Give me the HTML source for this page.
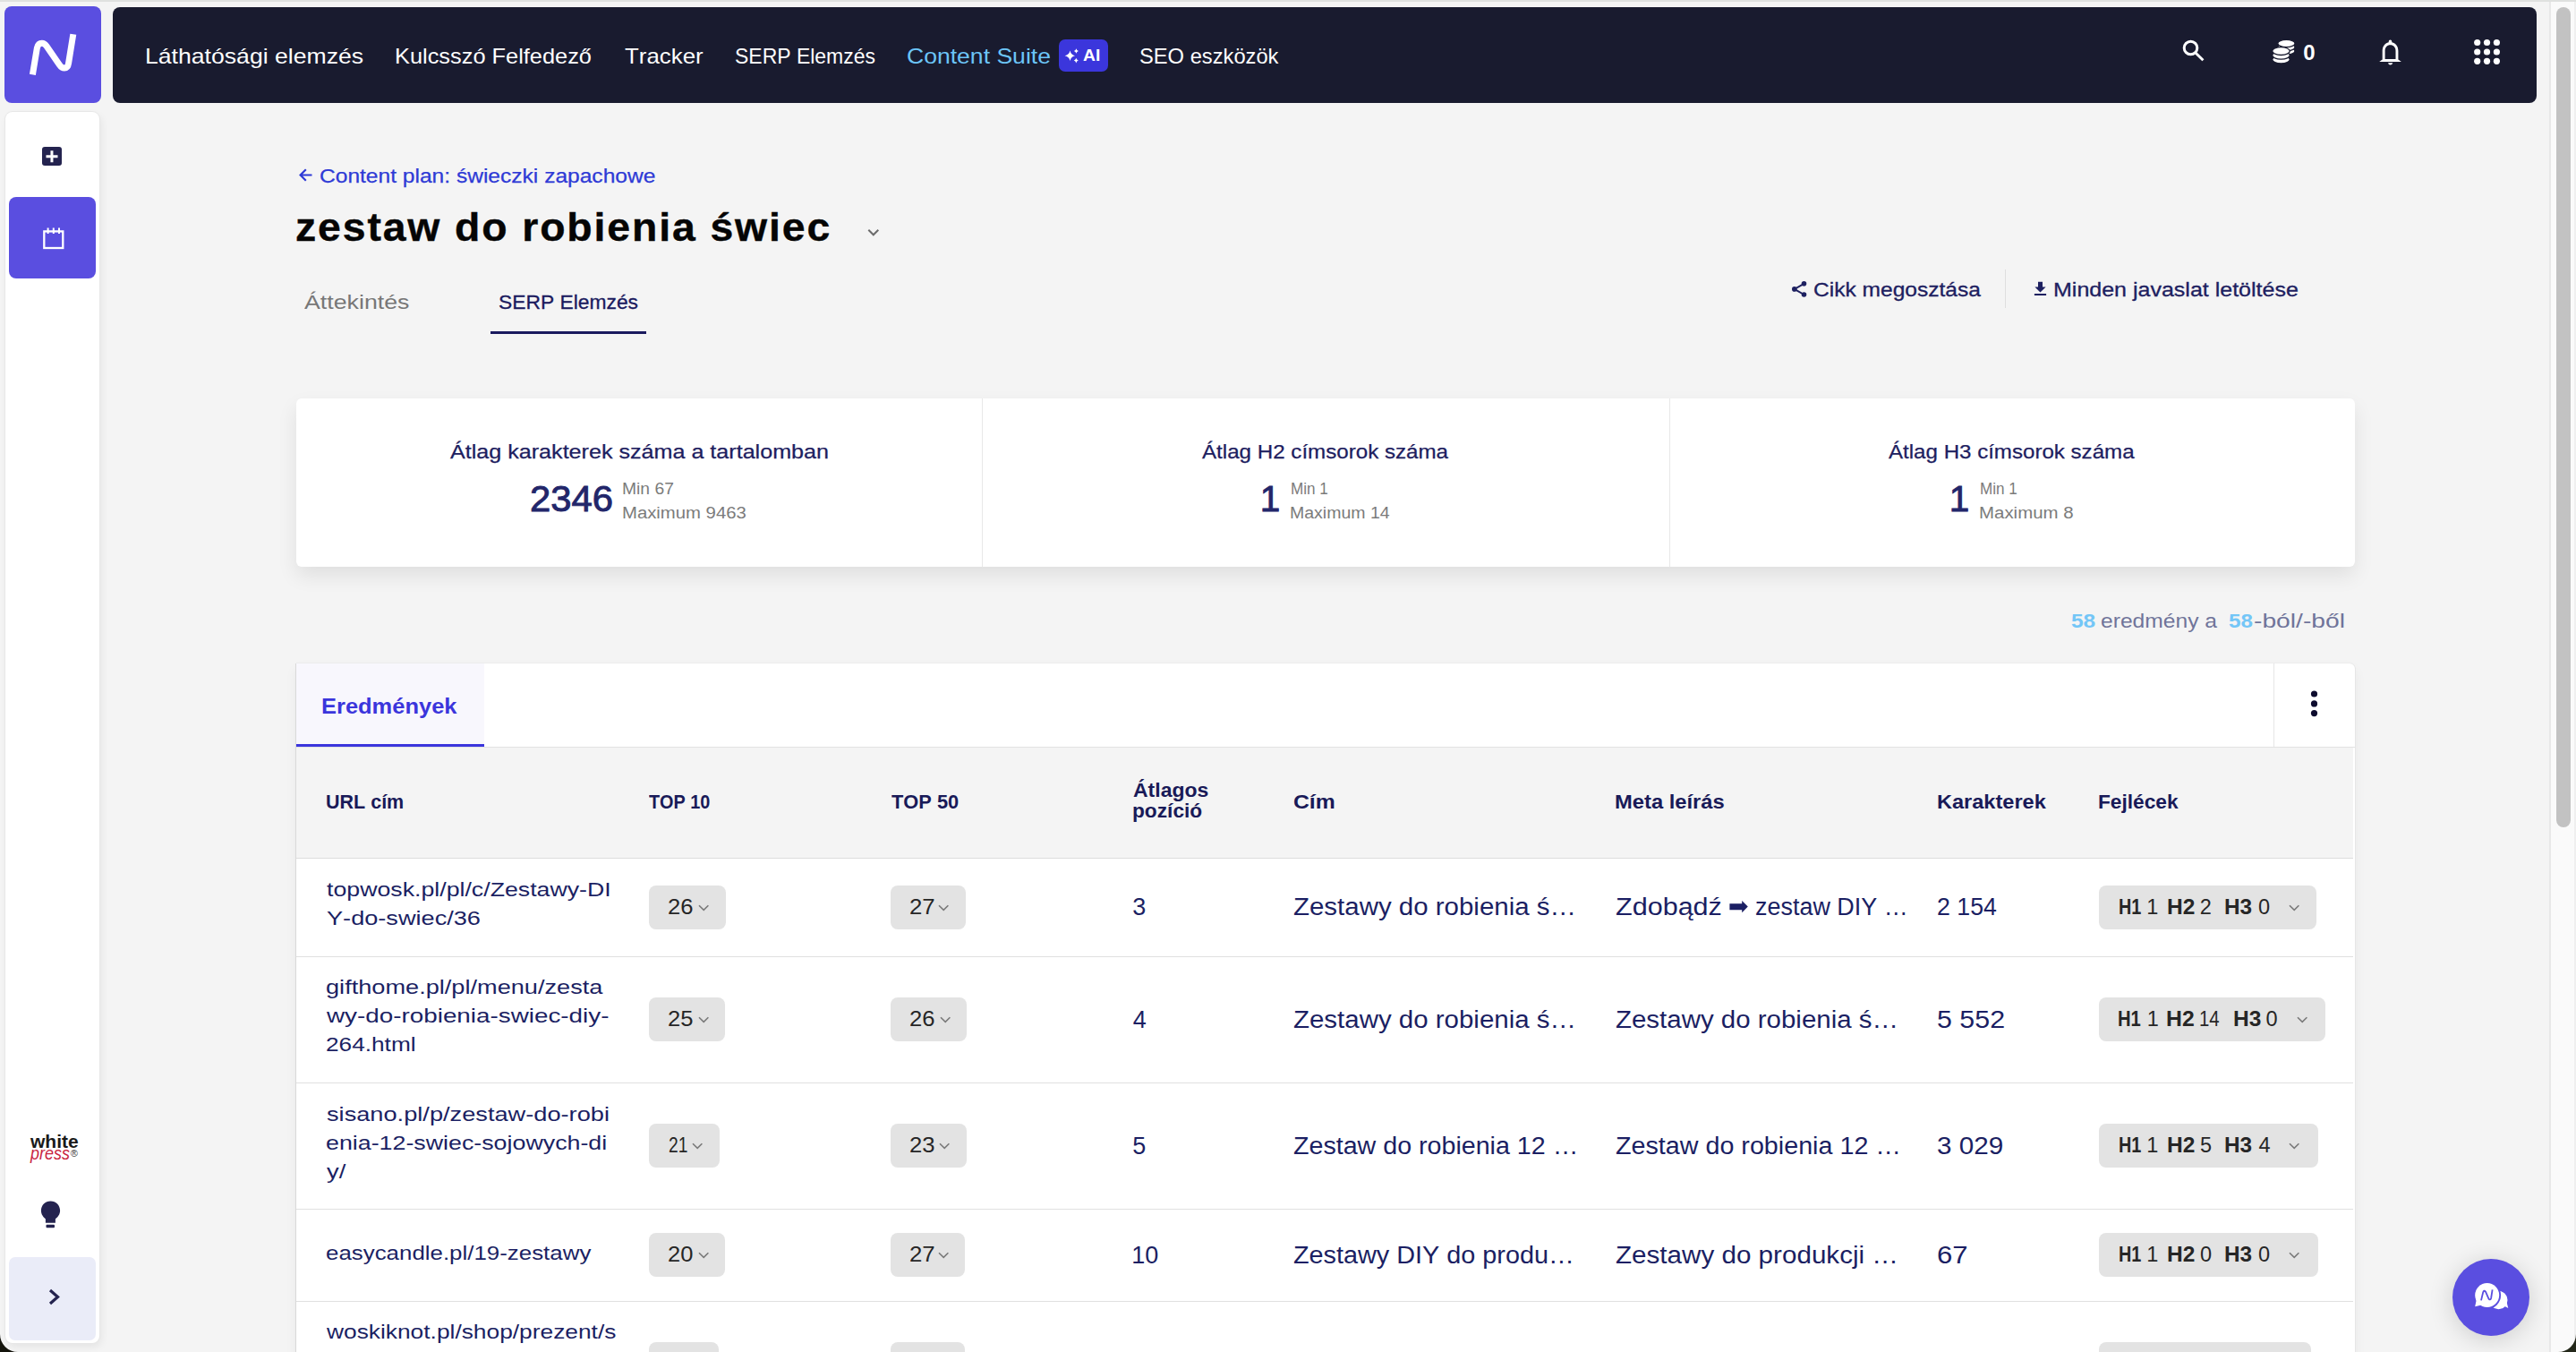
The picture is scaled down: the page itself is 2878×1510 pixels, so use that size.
<!DOCTYPE html>
<html><head><meta charset="utf-8"><title>SERP</title>
<style>
html,body{margin:0;padding:0;}
body{width:2878px;height:1510px;overflow:hidden;position:relative;background:#f4f4f4;font-family:"Liberation Sans",sans-serif;}
.a{position:absolute;display:block;}
.t{position:absolute;white-space:pre;font-kerning:none;font-family:"Liberation Sans",sans-serif;}
</style></head><body>
<div class="a" style="left:0.00px;top:0.00px;width:2878.00px;height:2.00px;background:#dfe1df;"></div>
<div class="a" style="left:2848.00px;top:2.00px;width:30.00px;height:1508.00px;background:#fafafa;border-left:2px solid #e8e8e8;box-sizing:border-box;"></div>
<div class="a" style="left:2876.00px;top:2.00px;width:2.00px;height:1508.00px;background:#efefef;"></div>
<div class="a" style="left:2856.00px;top:8.00px;width:16.00px;height:916.00px;background:#c2c2c2;border-radius:8px;"></div>
<div class="a" style="left:5.00px;top:7.00px;width:108.00px;height:108.00px;background:#5a4ee0;border-radius:8px;"></div>
<svg class="a" style="left:5.00px;top:7.00px;" width="108.00" height="108.00" viewBox="5.00 7.00 108.00 108.00"><path d="M36.4 83.4 L41.4 53.5 Q42.6 48.3 46.8 48.3 Q49.8 48.3 52 51.5 L66.3 72.3 Q68.8 76 72 76 Q75.8 76 76.6 70.5 L81.8 38.3" fill="none" stroke="#fff" stroke-width="7" stroke-linejoin="round"/></svg>
<div class="a" style="left:6.00px;top:125.00px;width:105.00px;height:1375.00px;background:#fff;border-radius:8px;box-shadow:0 0 0 1px #e7e7e7, 2px 4px 10px rgba(0,0,0,0.07);"></div>
<div class="a" style="left:47.40px;top:163.50px;width:21.90px;height:21.50px;background:#24234f;border-radius:3px;"></div>
<svg class="a" style="left:47.40px;top:163.50px;" width="22.00" height="21.50" viewBox="47.40 163.50 22.00 21.50"><path d="M58.35 167.8 V180.8 M51.9 174.3 H64.9" stroke="#fff" stroke-width="3"/></svg>
<div class="a" style="left:10.00px;top:220.00px;width:97.00px;height:90.70px;background:#5a4ee0;border-radius:8px;"></div>
<svg class="a" style="left:40.00px;top:245.00px;" width="40.00" height="40.00" viewBox="40.00 245.00 40.00 40.00"><rect x="49.3" y="258.4" width="21" height="18.6" fill="none" stroke="#fff" stroke-width="2.3"/><path d="M53.6 254.4 V261 M59.8 254.4 V261 M66 254.4 V261" stroke="#fff" stroke-width="2"/></svg>
<span class="t" style="left:34.06px;top:1266px;font-size:19.50px;line-height:19.50px;color:#1a1a1a;transform:scaleX(1.0767);transform-origin:0 0;font-weight:700;">white</span>
<span class="t" style="left:34.45px;top:1278px;font-size:20.00px;line-height:20.00px;color:#c9243f;transform:scaleX(0.8981);transform-origin:0 0;font-style:italic;">press</span>
<span class="t" style="left:78.83px;top:1283px;font-size:11.00px;line-height:11.00px;color:#333;">®</span>
<svg class="a" style="left:40.00px;top:1335.00px;" width="34.00" height="42.00" viewBox="40.00 1335.00 34.00 42.00"><path d="M56.5 1341.4 C50.5 1341.4 45.9 1346 45.9 1352 C45.9 1356.5 48.5 1359.2 50.9 1361.5 L50.9 1365.8 L61.9 1365.8 L61.9 1361.5 C64.5 1359.2 67.1 1356.5 67.1 1352 C67.1 1346 62.5 1341.4 56.5 1341.4 Z" fill="#24234f"/><rect x="51.5" y="1367.8" width="9.5" height="3.4" rx="1" fill="#24234f"/></svg>
<div class="a" style="left:10.00px;top:1404.00px;width:97.00px;height:93.00px;background:#eaecf8;border-radius:7px;"></div>
<svg class="a" style="left:45.00px;top:1430.00px;" width="30.00" height="40.00" viewBox="45.00 1430.00 30.00 40.00"><path d="M56 1441 L64.5 1448.5 L56 1456" fill="none" stroke="#24234f" stroke-width="3.2"/></svg>
<svg class="a" style="left:0.00px;top:1490.00px;" width="20.00" height="20.00" viewBox="0.00 1490.00 20.00 20.00"><path d="M0 1490 A20 20 0 0 0 20 1510 L0 1510 Z" fill="#14140c"/></svg>
<svg class="a" style="left:2858.00px;top:1490.00px;" width="20.00" height="20.00" viewBox="2858.00 1490.00 20.00 20.00"><path d="M2878 1490 A20 20 0 0 1 2858 1510 L2878 1510 Z" fill="#24281a"/></svg>
<div class="a" style="left:126.00px;top:8.00px;width:2708.00px;height:107.00px;background:#191b2f;border-radius:8px;"></div>
<span class="t" style="left:162.42px;top:51px;font-size:24.00px;line-height:24.00px;color:#fff;transform:scaleX(1.1091);transform-origin:0 0;">Láthatósági elemzés</span>
<span class="t" style="left:441.42px;top:51px;font-size:24.00px;line-height:24.00px;color:#fff;transform:scaleX(1.0571);transform-origin:0 0;">Kulcsszó Felfedező</span>
<span class="t" style="left:697.62px;top:51px;font-size:24.00px;line-height:24.00px;color:#fff;transform:scaleX(1.0771);transform-origin:0 0;">Tracker</span>
<span class="t" style="left:820.86px;top:51px;font-size:24.00px;line-height:24.00px;color:#fff;transform:scaleX(0.9569);transform-origin:0 0;">SERP Elemzés</span>
<span class="t" style="left:1013.35px;top:51px;font-size:24.00px;line-height:24.00px;color:#6cc5f8;transform:scaleX(1.1066);transform-origin:0 0;">Content Suite</span>
<div class="a" style="left:1183.20px;top:44.20px;width:54.60px;height:35.40px;background:#3b36dc;border-radius:7px;"></div>
<svg class="a" style="left:1185.00px;top:48.00px;" width="24.00" height="28.00" viewBox="1185.00 48.00 24.00 28.00"><path d="M1195.5 56.5 Q1196.5 61.2 1201 62.3 Q1196.5 63.4 1195.5 68 Q1194.5 63.4 1189.6 62.3 Q1194.5 61.2 1195.5 56.5 Z M1202.4 54.2 Q1202.9 56.4 1204.9 57 Q1202.9 57.6 1202.4 59.8 Q1201.9 57.6 1199.9 57 Q1201.9 56.4 1202.4 54.2 Z M1202.3 64.8 Q1202.8 67 1204.8 67.6 Q1202.8 68.2 1202.3 70.4 Q1201.8 68.2 1199.8 67.6 Q1201.8 67 1202.3 64.8 Z" fill="#fff"/></svg>
<span class="t" style="left:1210.02px;top:54px;font-size:17.50px;line-height:17.50px;color:#fff;transform:scaleX(1.1011);transform-origin:0 0;font-weight:700;">AI</span>
<span class="t" style="left:1273.42px;top:51px;font-size:24.00px;line-height:24.00px;color:#fff;transform:scaleX(0.9876);transform-origin:0 0;">SEO eszközök</span>
<svg class="a" style="left:2430.00px;top:35.00px;" width="40.00" height="40.00" viewBox="2430.00 35.00 40.00 40.00"><circle cx="2447.5" cy="53.5" r="7.3" fill="none" stroke="#fff" stroke-width="3"/><path d="M2453.2 59.3 L2461.4 67.3" stroke="#fff" stroke-width="3"/></svg>
<svg class="a" style="left:2530.00px;top:38.00px;" width="40.00" height="40.00" viewBox="2530.00 38.00 40.00 40.00"><ellipse cx="2554.4" cy="57.0" rx="9.6" ry="4.2" fill="#fff" stroke="#191b2f" stroke-width="1.3"/><ellipse cx="2554.4" cy="52.7" rx="9.6" ry="4.2" fill="#fff" stroke="#191b2f" stroke-width="1.3"/><ellipse cx="2554.4" cy="48.5" rx="9.6" ry="4.2" fill="#fff" stroke="#191b2f" stroke-width="1.3"/><ellipse cx="2548.5" cy="66.5" rx="9.8" ry="4.4" fill="#fff" stroke="#191b2f" stroke-width="1.3"/><ellipse cx="2548.5" cy="61.8" rx="9.8" ry="4.4" fill="#fff" stroke="#191b2f" stroke-width="1.3"/><ellipse cx="2548.5" cy="57.1" rx="9.8" ry="4.4" fill="#fff" stroke="#191b2f" stroke-width="1.3"/></svg>
<span class="t" style="left:2573.25px;top:47px;font-size:24.00px;line-height:24.00px;color:#fff;font-weight:700;">0</span>
<svg class="a" style="left:2650.00px;top:38.00px;" width="40.00" height="40.00" viewBox="2650.00 38.00 40.00 40.00"><path d="M2670.5 44.6 a1.8 1.8 0 0 1 1.8 1.8 v0.9 C2677 48.4 2679.4 52 2679.4 57 V66.5 L2682.9 69 H2658.2 L2661.7 66.5 V57 C2661.7 52 2664.2 48.4 2668.7 47.3 v-0.9 a1.8 1.8 0 0 1 1.8 -1.8 Z" fill="#fff"/><path d="M2664.6 56.8 C2664.6 52.6 2667 50.2 2670.5 50.2 C2674 50.2 2676.5 52.6 2676.5 56.8 V66 H2664.6 Z" fill="#191b2f"/><path d="M2668 70.2 H2673.3 Q2672.6 72.6 2670.6 72.6 Q2668.6 72.6 2668 70.2 Z" fill="#fff"/></svg>
<svg class="a" style="left:2755.00px;top:38.00px;" width="45.00" height="40.00" viewBox="2755.00 38.00 45.00 40.00"><circle cx="2767.7" cy="47.5" r="3.6" fill="#fff"/><circle cx="2767.7" cy="58.0" r="3.6" fill="#fff"/><circle cx="2767.7" cy="68.3" r="3.6" fill="#fff"/><circle cx="2778.5" cy="47.5" r="3.6" fill="#fff"/><circle cx="2778.5" cy="58.0" r="3.6" fill="#fff"/><circle cx="2778.5" cy="68.3" r="3.6" fill="#fff"/><circle cx="2789.4" cy="47.5" r="3.6" fill="#fff"/><circle cx="2789.4" cy="58.0" r="3.6" fill="#fff"/><circle cx="2789.4" cy="68.3" r="3.6" fill="#fff"/></svg>
<svg class="a" style="left:328.00px;top:182.00px;" width="26.00" height="26.00" viewBox="328.00 182.00 26.00 26.00"><path d="M348.5 195.5 H336 M341.8 189.3 L335.6 195.5 L341.8 201.7" fill="none" stroke="#2e3ad6" stroke-width="2.2"/></svg>
<span class="t" style="left:356.75px;top:187px;font-size:21.50px;line-height:21.50px;color:#2e3ad6;transform:scaleX(1.1421);transform-origin:0 0;-webkit-text-stroke:0.25px #2e3ad6;">Content plan: świeczki zapachowe</span>
<span class="t" style="left:330.40px;top:232px;font-size:44.00px;line-height:44.00px;color:#050505;letter-spacing:1.802px;transform:scaleX(1.0529);transform-origin:0 0;font-weight:700;-webkit-text-stroke:0.4px #050505;">zestaw do robienia świec</span>
<svg class="a" style="left:964.00px;top:250.00px;" width="24.00" height="20.00" viewBox="964.00 250.00 24.00 20.00"><path d="M970.3 256.8 L975.8 262.3 L981.3 256.8" fill="none" stroke="#6b6b6b" stroke-width="2"/></svg>
<span class="t" style="left:340.35px;top:327px;font-size:22.40px;line-height:22.40px;color:#777777;transform:scaleX(1.1948);transform-origin:0 0;">Áttekintés</span>
<span class="t" style="left:556.76px;top:327px;font-size:22.40px;line-height:22.40px;color:#1a1a5e;transform:scaleX(1.0193);transform-origin:0 0;-webkit-text-stroke:0.3px #1a1a5e;">SERP Elemzés</span>
<div class="a" style="left:548.00px;top:369.80px;width:174.00px;height:3.10px;background:#1a1a5e;"></div>
<svg class="a" style="left:1998.00px;top:310.00px;" width="26.00" height="26.00" viewBox="1998.00 310.00 26.00 26.00"><circle cx="2015.5" cy="316.8" r="2.8" fill="#1d2060"/><circle cx="2015.5" cy="329" r="2.8" fill="#1d2060"/><circle cx="2004.8" cy="322.9" r="2.8" fill="#1d2060"/><path d="M2015.5 316.8 L2004.8 322.9 L2015.5 329" fill="none" stroke="#1d2060" stroke-width="2"/></svg>
<span class="t" style="left:2025.75px;top:313px;font-size:22.40px;line-height:22.40px;color:#1d2060;transform:scaleX(1.0967);transform-origin:0 0;-webkit-text-stroke:0.3px #1d2060;">Cikk megosztása</span>
<div class="a" style="left:2240.00px;top:301.00px;width:1.00px;height:43.00px;background:#dedede;"></div>
<svg class="a" style="left:2268.00px;top:310.00px;" width="24.00" height="24.00" viewBox="2268.00 310.00 24.00 24.00"><path d="M2277 314.8 H2282 V320.5 H2285.6 L2279.5 326.4 L2273.4 320.5 H2277 Z" fill="#1d2060"/><rect x="2272.9" y="328" width="13.2" height="2" fill="#1d2060"/></svg>
<span class="t" style="left:2293.95px;top:313px;font-size:22.40px;line-height:22.40px;color:#1d2060;transform:scaleX(1.1169);transform-origin:0 0;-webkit-text-stroke:0.3px #1d2060;">Minden javaslat letöltése</span>
<div class="a" style="left:331.00px;top:445.00px;width:2300.00px;height:187.50px;background:#fff;border-radius:6px;box-shadow:0 10px 22px rgba(0,0,0,0.085);"></div>
<div class="a" style="left:1097.00px;top:445.00px;width:1.00px;height:187.50px;background:#e8e8e8;"></div>
<div class="a" style="left:1864.50px;top:445.00px;width:1.00px;height:187.50px;background:#e8e8e8;"></div>
<span class="t" style="left:502.65px;top:495px;font-size:21.50px;line-height:21.50px;color:#1d2060;transform:scaleX(1.1682);transform-origin:0 0;-webkit-text-stroke:0.25px #1d2060;">Átlag karakterek száma a tartalomban</span>
<span class="t" style="left:592.00px;top:537px;font-size:40.50px;line-height:40.50px;color:#22266a;transform:scaleX(1.0327);transform-origin:0 0;-webkit-text-stroke:0.9px #22266a;">2346</span>
<span class="t" style="left:695.32px;top:537px;font-size:18.00px;line-height:18.00px;color:#7b7b7b;transform:scaleX(1.0708);transform-origin:0 0;">Min 67</span>
<span class="t" style="left:695.23px;top:564px;font-size:18.00px;line-height:18.00px;color:#7b7b7b;transform:scaleX(1.1277);transform-origin:0 0;">Maximum 9463</span>
<span class="t" style="left:1342.95px;top:495px;font-size:21.50px;line-height:21.50px;color:#1d2060;transform:scaleX(1.1229);transform-origin:0 0;-webkit-text-stroke:0.25px #1d2060;">Átlag H2 címsorok száma</span>
<span class="t" style="left:1407.82px;top:537px;font-size:40.50px;line-height:40.50px;color:#22266a;-webkit-text-stroke:0.9px #22266a;">1</span>
<span class="t" style="left:1441.60px;top:537px;font-size:18.00px;line-height:18.00px;color:#7b7b7b;transform:scaleX(0.9505);transform-origin:0 0;">Min 1</span>
<span class="t" style="left:1441.40px;top:564px;font-size:18.00px;line-height:18.00px;color:#7b7b7b;transform:scaleX(1.0829);transform-origin:0 0;">Maximum 14</span>
<span class="t" style="left:2110.15px;top:495px;font-size:21.50px;line-height:21.50px;color:#1d2060;transform:scaleX(1.1209);transform-origin:0 0;-webkit-text-stroke:0.25px #1d2060;">Átlag H3 címsorok száma</span>
<span class="t" style="left:2177.82px;top:537px;font-size:40.50px;line-height:40.50px;color:#22266a;-webkit-text-stroke:0.9px #22266a;">1</span>
<span class="t" style="left:2211.60px;top:537px;font-size:18.00px;line-height:18.00px;color:#7b7b7b;transform:scaleX(0.9505);transform-origin:0 0;">Min 1</span>
<span class="t" style="left:2211.32px;top:564px;font-size:18.00px;line-height:18.00px;color:#7b7b7b;transform:scaleX(1.1349);transform-origin:0 0;">Maximum 8</span>
<span class="t" style="left:2313.55px;top:683px;font-size:22.50px;line-height:22.50px;color:#73c6f7;transform:scaleX(1.0870);transform-origin:0 0;font-weight:700;">58</span>
<span class="t" style="left:2346.95px;top:683px;font-size:22.50px;line-height:22.50px;color:#70749a;transform:scaleX(1.0945);transform-origin:0 0;">eredmény a</span>
<span class="t" style="left:2490.36px;top:683px;font-size:22.50px;line-height:22.50px;color:#73c6f7;transform:scaleX(1.0743);transform-origin:0 0;font-weight:700;">58</span>
<span class="t" style="left:2517.54px;top:683px;font-size:22.50px;line-height:22.50px;color:#70749a;transform:scaleX(1.2553);transform-origin:0 0;">-ból/-ből</span>
<div class="a" style="left:331.00px;top:741.00px;width:2300.00px;height:789.00px;background:#fff;border-radius:0 6px 0 0;box-shadow:-1px 0 0 0 #d9d9d9, 1px 0 0 0 #e6e6e6, 0 -1px 0 0 #ececec, 0 6px 14px rgba(0,0,0,0.06);"></div>
<div class="a" style="left:331.00px;top:741.00px;width:210.00px;height:93.00px;background:#f8f7fd;"></div>
<div class="a" style="left:331.00px;top:831.00px;width:210.00px;height:3.00px;background:#3b35dc;"></div>
<div class="a" style="left:2540.00px;top:741.00px;width:1.00px;height:93.00px;background:#e6e6e6;"></div>
<div class="a" style="left:331.00px;top:834.00px;width:2300.00px;height:1.00px;background:#e2e2e2;"></div>
<span class="t" style="left:359.30px;top:777px;font-size:24.50px;line-height:24.50px;color:#3b35dc;transform:scaleX(1.0395);transform-origin:0 0;font-weight:700;">Eredmények</span>
<svg class="a" style="left:2575.00px;top:765.00px;" width="22.00" height="42.00" viewBox="2575.00 765.00 22.00 42.00"><circle cx="2585.5" cy="775.0" r="3.6" fill="#0d0b2e"/><circle cx="2585.5" cy="785.9" r="3.6" fill="#0d0b2e"/><circle cx="2585.5" cy="796.6" r="3.6" fill="#0d0b2e"/></svg>
<div class="a" style="left:331.00px;top:835.00px;width:2297.50px;height:123.00px;background:#f4f4f4;"></div>
<div class="a" style="left:331.00px;top:958.00px;width:2297.50px;height:1.20px;background:#dcdcdc;"></div>
<span class="t" style="left:364.11px;top:885px;font-size:22.50px;line-height:22.50px;color:#191a58;transform:scaleX(0.9558);transform-origin:0 0;font-weight:700;">URL cím</span>
<span class="t" style="left:725.48px;top:885px;font-size:22.50px;line-height:22.50px;color:#191a58;transform:scaleX(0.8814);transform-origin:0 0;font-weight:700;">TOP 10</span>
<span class="t" style="left:995.76px;top:885px;font-size:22.50px;line-height:22.50px;color:#191a58;transform:scaleX(0.9692);transform-origin:0 0;font-weight:700;">TOP 50</span>
<span class="t" style="left:1265.63px;top:872px;font-size:22.50px;line-height:22.50px;color:#191a58;transform:scaleX(1.0219);transform-origin:0 0;font-weight:700;">Átlagos</span>
<span class="t" style="left:1264.70px;top:895px;font-size:22.50px;line-height:22.50px;color:#191a58;transform:scaleX(1.0088);transform-origin:0 0;font-weight:700;">pozíció</span>
<span class="t" style="left:1444.59px;top:885px;font-size:22.50px;line-height:22.50px;color:#191a58;transform:scaleX(1.0998);transform-origin:0 0;font-weight:700;">Cím</span>
<span class="t" style="left:1804.21px;top:885px;font-size:22.50px;line-height:22.50px;color:#191a58;transform:scaleX(1.0555);transform-origin:0 0;font-weight:700;">Meta leírás</span>
<span class="t" style="left:2163.92px;top:885px;font-size:22.50px;line-height:22.50px;color:#191a58;transform:scaleX(1.0466);transform-origin:0 0;font-weight:700;">Karakterek</span>
<span class="t" style="left:2343.88px;top:885px;font-size:22.50px;line-height:22.50px;color:#191a58;transform:scaleX(1.0088);transform-origin:0 0;font-weight:700;">Fejlécek</span>
<div class="a" style="left:331.00px;top:1068.00px;width:2297.50px;height:1.20px;background:#e0e0e0;"></div>
<div class="a" style="left:331.00px;top:1209.00px;width:2297.50px;height:1.20px;background:#e0e0e0;"></div>
<div class="a" style="left:331.00px;top:1350.00px;width:2297.50px;height:1.20px;background:#e0e0e0;"></div>
<div class="a" style="left:331.00px;top:1453.00px;width:2297.50px;height:1.20px;background:#e0e0e0;"></div>
<span class="t" style="left:365.00px;top:983px;font-size:22.30px;line-height:22.30px;color:#1b1f63;transform:scaleX(1.1982);transform-origin:0 0;">topwosk.pl/pl/c/Zestawy-DI</span>
<span class="t" style="left:364.80px;top:1015px;font-size:22.30px;line-height:22.30px;color:#1b1f63;transform:scaleX(1.2173);transform-origin:0 0;">Y-do-swiec/36</span>
<span class="t" style="left:364.26px;top:1092px;font-size:22.30px;line-height:22.30px;color:#1b1f63;transform:scaleX(1.2177);transform-origin:0 0;">gifthome.pl/pl/menu/zesta</span>
<span class="t" style="left:365.44px;top:1124px;font-size:22.30px;line-height:22.30px;color:#1b1f63;transform:scaleX(1.2480);transform-origin:0 0;">wy-do-robienia-swiec-diy-</span>
<span class="t" style="left:364.08px;top:1156px;font-size:22.30px;line-height:22.30px;color:#1b1f63;transform:scaleX(1.1759);transform-origin:0 0;">264.html</span>
<span class="t" style="left:364.64px;top:1234px;font-size:22.30px;line-height:22.30px;color:#1b1f63;transform:scaleX(1.2198);transform-origin:0 0;">sisano.pl/p/zestaw-do-robi</span>
<span class="t" style="left:364.26px;top:1266px;font-size:22.30px;line-height:22.30px;color:#1b1f63;transform:scaleX(1.2017);transform-origin:0 0;">enia-12-swiec-sojowych-di</span>
<span class="t" style="left:365.33px;top:1298px;font-size:22.30px;line-height:22.30px;color:#1b1f63;transform:scaleX(1.2261);transform-origin:0 0;">y/</span>
<span class="t" style="left:364.30px;top:1389px;font-size:22.30px;line-height:22.30px;color:#1b1f63;transform:scaleX(1.1606);transform-origin:0 0;">easycandle.pl/19-zestawy</span>
<span class="t" style="left:365.44px;top:1477px;font-size:22.30px;line-height:22.30px;color:#1b1f63;transform:scaleX(1.1806);transform-origin:0 0;">woskiknot.pl/shop/prezent/s</span>
<span class="t" style="left:365.44px;top:1508px;font-size:22.30px;line-height:22.30px;color:#1b1f63;transform:scaleX(1.1940);transform-origin:0 0;">wiece-do-robienia/</span>
<div class="a" style="left:725.20px;top:989.00px;width:85.50px;height:49.00px;background:#e3e3e3;border-radius:8px;"></div>
<span class="t" style="left:746.41px;top:1001px;font-size:24.50px;line-height:24.50px;color:#262626;transform:scaleX(1.0464);transform-origin:0 0;">26</span>
<svg class="a" style="left:778.70px;top:1007.50px;" width="16.00" height="12.00" viewBox="778.70 1007.50 16.00 12.00"><path d="M780.7 1010.7 L785.9 1015.9 L791.1 1010.7" fill="none" stroke="#7a7a7a" stroke-width="1.6"/></svg>
<div class="a" style="left:995.10px;top:989.00px;width:83.70px;height:49.00px;background:#e3e3e3;border-radius:8px;"></div>
<span class="t" style="left:1016.40px;top:1001px;font-size:24.50px;line-height:24.50px;color:#262626;transform:scaleX(1.0530);transform-origin:0 0;">27</span>
<svg class="a" style="left:1046.80px;top:1007.50px;" width="16.00" height="12.00" viewBox="1046.80 1007.50 16.00 12.00"><path d="M1048.8 1010.7 L1054.0 1015.9 L1059.2 1010.7" fill="none" stroke="#7a7a7a" stroke-width="1.6"/></svg>
<span class="t" style="left:1265.27px;top:1000px;font-size:27.00px;line-height:27.00px;color:#1b1f63;">3</span>
<span class="t" style="left:1445.07px;top:1000px;font-size:27.00px;line-height:27.00px;color:#1b1f63;transform:scaleX(1.0908);transform-origin:0 0;">Zestawy do robienia ś…</span>
<span class="t" style="left:2164.15px;top:1000px;font-size:27.00px;line-height:27.00px;color:#1b1f63;transform:scaleX(0.9906);transform-origin:0 0;">2 154</span>
<div class="a" style="left:2345.00px;top:989.00px;width:242.80px;height:49.00px;background:#e3e3e3;border-radius:8px;"></div>
<span class="t" style="left:2366.57px;top:1002px;font-size:23.50px;line-height:23.50px;color:#262626;transform:scaleX(0.8449);transform-origin:0 0;font-weight:700;">H1</span>
<span class="t" style="left:2398.21px;top:1002px;font-size:23.50px;line-height:23.50px;color:#262626;">1</span>
<span class="t" style="left:2420.66px;top:1002px;font-size:23.50px;line-height:23.50px;color:#262626;transform:scaleX(1.0426);transform-origin:0 0;font-weight:700;">H2</span>
<span class="t" style="left:2457.82px;top:1002px;font-size:23.50px;line-height:23.50px;color:#262626;">2</span>
<span class="t" style="left:2485.07px;top:1002px;font-size:23.50px;line-height:23.50px;color:#262626;transform:scaleX(1.0355);transform-origin:0 0;font-weight:700;">H3</span>
<span class="t" style="left:2523.08px;top:1002px;font-size:23.50px;line-height:23.50px;color:#262626;">0</span>
<svg class="a" style="left:2556.00px;top:1007.50px;" width="16.00" height="12.00" viewBox="2556.00 1007.50 16.00 12.00"><path d="M2558.0 1010.7 L2563.2 1015.9 L2568.4 1010.7" fill="none" stroke="#7a7a7a" stroke-width="1.6"/></svg>
<div class="a" style="left:725.20px;top:1114.40px;width:85.30px;height:49.00px;background:#e3e3e3;border-radius:8px;"></div>
<span class="t" style="left:746.41px;top:1126px;font-size:24.50px;line-height:24.50px;color:#262626;transform:scaleX(1.0444);transform-origin:0 0;">25</span>
<svg class="a" style="left:778.50px;top:1132.90px;" width="16.00" height="12.00" viewBox="778.50 1132.90 16.00 12.00"><path d="M780.5 1136.1 L785.7 1141.3 L790.9 1136.1" fill="none" stroke="#7a7a7a" stroke-width="1.6"/></svg>
<div class="a" style="left:995.10px;top:1114.40px;width:85.40px;height:49.00px;background:#e3e3e3;border-radius:8px;"></div>
<span class="t" style="left:1016.41px;top:1126px;font-size:24.50px;line-height:24.50px;color:#262626;transform:scaleX(1.0464);transform-origin:0 0;">26</span>
<svg class="a" style="left:1048.50px;top:1132.90px;" width="16.00" height="12.00" viewBox="1048.50 1132.90 16.00 12.00"><path d="M1050.5 1136.1 L1055.7 1141.3 L1060.9 1136.1" fill="none" stroke="#7a7a7a" stroke-width="1.6"/></svg>
<span class="t" style="left:1265.68px;top:1126px;font-size:27.00px;line-height:27.00px;color:#1b1f63;">4</span>
<span class="t" style="left:1445.07px;top:1126px;font-size:27.00px;line-height:27.00px;color:#1b1f63;transform:scaleX(1.0908);transform-origin:0 0;">Zestawy do robienia ś…</span>
<span class="t" style="left:1805.07px;top:1126px;font-size:27.00px;line-height:27.00px;color:#1b1f63;transform:scaleX(1.0908);transform-origin:0 0;">Zestawy do robienia ś…</span>
<span class="t" style="left:2164.28px;top:1126px;font-size:27.00px;line-height:27.00px;color:#1b1f63;transform:scaleX(1.1255);transform-origin:0 0;">5 552</span>
<div class="a" style="left:2345.00px;top:1114.40px;width:252.60px;height:49.00px;background:#e3e3e3;border-radius:8px;"></div>
<span class="t" style="left:2366.15px;top:1127px;font-size:23.50px;line-height:23.50px;color:#262626;transform:scaleX(0.8593);transform-origin:0 0;font-weight:700;">H1</span>
<span class="t" style="left:2398.71px;top:1127px;font-size:23.50px;line-height:23.50px;color:#262626;">1</span>
<span class="t" style="left:2420.34px;top:1127px;font-size:23.50px;line-height:23.50px;color:#262626;transform:scaleX(1.0535);transform-origin:0 0;font-weight:700;">H2</span>
<span class="t" style="left:2457.45px;top:1127px;font-size:23.50px;line-height:23.50px;color:#262626;transform:scaleX(0.8664);transform-origin:0 0;">14</span>
<span class="t" style="left:2494.56px;top:1127px;font-size:23.50px;line-height:23.50px;color:#262626;transform:scaleX(1.0427);transform-origin:0 0;font-weight:700;">H3</span>
<span class="t" style="left:2531.58px;top:1127px;font-size:23.50px;line-height:23.50px;color:#262626;">0</span>
<svg class="a" style="left:2565.30px;top:1132.90px;" width="16.00" height="12.00" viewBox="2565.30 1132.90 16.00 12.00"><path d="M2567.3 1136.1 L2572.5 1141.3 L2577.7 1136.1" fill="none" stroke="#7a7a7a" stroke-width="1.6"/></svg>
<div class="a" style="left:725.20px;top:1255.40px;width:78.40px;height:49.00px;background:#e3e3e3;border-radius:8px;"></div>
<span class="t" style="left:746.73px;top:1267px;font-size:24.50px;line-height:24.50px;color:#262626;transform:scaleX(0.7856);transform-origin:0 0;">21</span>
<svg class="a" style="left:771.60px;top:1273.90px;" width="16.00" height="12.00" viewBox="771.60 1273.90 16.00 12.00"><path d="M773.6 1277.1 L778.8 1282.3 L784.0 1277.1" fill="none" stroke="#7a7a7a" stroke-width="1.6"/></svg>
<div class="a" style="left:995.10px;top:1255.40px;width:84.90px;height:49.00px;background:#e3e3e3;border-radius:8px;"></div>
<span class="t" style="left:1016.41px;top:1267px;font-size:24.50px;line-height:24.50px;color:#262626;transform:scaleX(1.0464);transform-origin:0 0;">23</span>
<svg class="a" style="left:1048.00px;top:1273.90px;" width="16.00" height="12.00" viewBox="1048.00 1273.90 16.00 12.00"><path d="M1050.0 1277.1 L1055.2 1282.3 L1060.4 1277.1" fill="none" stroke="#7a7a7a" stroke-width="1.6"/></svg>
<span class="t" style="left:1265.22px;top:1267px;font-size:27.00px;line-height:27.00px;color:#1b1f63;">5</span>
<span class="t" style="left:1445.09px;top:1267px;font-size:27.00px;line-height:27.00px;color:#1b1f63;transform:scaleX(1.0604);transform-origin:0 0;">Zestaw do robienia 12 …</span>
<span class="t" style="left:1805.09px;top:1267px;font-size:27.00px;line-height:27.00px;color:#1b1f63;transform:scaleX(1.0628);transform-origin:0 0;">Zestaw do robienia 12 …</span>
<span class="t" style="left:2164.37px;top:1267px;font-size:27.00px;line-height:27.00px;color:#1b1f63;transform:scaleX(1.0987);transform-origin:0 0;">3 029</span>
<div class="a" style="left:2345.00px;top:1255.40px;width:244.80px;height:49.00px;background:#e3e3e3;border-radius:8px;"></div>
<span class="t" style="left:2366.57px;top:1268px;font-size:23.50px;line-height:23.50px;color:#262626;transform:scaleX(0.8449);transform-origin:0 0;font-weight:700;">H1</span>
<span class="t" style="left:2398.21px;top:1268px;font-size:23.50px;line-height:23.50px;color:#262626;">1</span>
<span class="t" style="left:2420.66px;top:1268px;font-size:23.50px;line-height:23.50px;color:#262626;transform:scaleX(1.0426);transform-origin:0 0;font-weight:700;">H2</span>
<span class="t" style="left:2458.06px;top:1268px;font-size:23.50px;line-height:23.50px;color:#262626;">5</span>
<span class="t" style="left:2485.07px;top:1268px;font-size:23.50px;line-height:23.50px;color:#262626;transform:scaleX(1.0355);transform-origin:0 0;font-weight:700;">H3</span>
<span class="t" style="left:2523.46px;top:1268px;font-size:23.50px;line-height:23.50px;color:#262626;">4</span>
<svg class="a" style="left:2556.00px;top:1273.90px;" width="16.00" height="12.00" viewBox="2556.00 1273.90 16.00 12.00"><path d="M2558.0 1277.1 L2563.2 1282.3 L2568.4 1277.1" fill="none" stroke="#7a7a7a" stroke-width="1.6"/></svg>
<div class="a" style="left:725.20px;top:1377.40px;width:85.30px;height:49.00px;background:#e3e3e3;border-radius:8px;"></div>
<span class="t" style="left:746.42px;top:1389px;font-size:24.50px;line-height:24.50px;color:#262626;transform:scaleX(1.0414);transform-origin:0 0;">20</span>
<svg class="a" style="left:778.50px;top:1395.90px;" width="16.00" height="12.00" viewBox="778.50 1395.90 16.00 12.00"><path d="M780.5 1399.1 L785.7 1404.3 L790.9 1399.1" fill="none" stroke="#7a7a7a" stroke-width="1.6"/></svg>
<div class="a" style="left:995.10px;top:1377.40px;width:83.40px;height:49.00px;background:#e3e3e3;border-radius:8px;"></div>
<span class="t" style="left:1016.40px;top:1389px;font-size:24.50px;line-height:24.50px;color:#262626;transform:scaleX(1.0530);transform-origin:0 0;">27</span>
<svg class="a" style="left:1046.50px;top:1395.90px;" width="16.00" height="12.00" viewBox="1046.50 1395.90 16.00 12.00"><path d="M1048.5 1399.1 L1053.7 1404.3 L1058.9 1399.1" fill="none" stroke="#7a7a7a" stroke-width="1.6"/></svg>
<span class="t" style="left:1264.24px;top:1389px;font-size:27.00px;line-height:27.00px;color:#1b1f63;">10</span>
<span class="t" style="left:1445.09px;top:1389px;font-size:27.00px;line-height:27.00px;color:#1b1f63;transform:scaleX(1.0670);transform-origin:0 0;">Zestawy DIY do produ…</span>
<span class="t" style="left:1805.06px;top:1389px;font-size:27.00px;line-height:27.00px;color:#1b1f63;transform:scaleX(1.0966);transform-origin:0 0;">Zestawy do produkcji …</span>
<span class="t" style="left:2163.92px;top:1389px;font-size:27.00px;line-height:27.00px;color:#1b1f63;transform:scaleX(1.1537);transform-origin:0 0;">67</span>
<div class="a" style="left:2345.00px;top:1377.40px;width:244.80px;height:49.00px;background:#e3e3e3;border-radius:8px;"></div>
<span class="t" style="left:2366.57px;top:1390px;font-size:23.50px;line-height:23.50px;color:#262626;transform:scaleX(0.8449);transform-origin:0 0;font-weight:700;">H1</span>
<span class="t" style="left:2398.21px;top:1390px;font-size:23.50px;line-height:23.50px;color:#262626;">1</span>
<span class="t" style="left:2420.66px;top:1390px;font-size:23.50px;line-height:23.50px;color:#262626;transform:scaleX(1.0426);transform-origin:0 0;font-weight:700;">H2</span>
<span class="t" style="left:2458.08px;top:1390px;font-size:23.50px;line-height:23.50px;color:#262626;">0</span>
<span class="t" style="left:2485.07px;top:1390px;font-size:23.50px;line-height:23.50px;color:#262626;transform:scaleX(1.0355);transform-origin:0 0;font-weight:700;">H3</span>
<span class="t" style="left:2523.08px;top:1390px;font-size:23.50px;line-height:23.50px;color:#262626;">0</span>
<svg class="a" style="left:2556.00px;top:1395.90px;" width="16.00" height="12.00" viewBox="2556.00 1395.90 16.00 12.00"><path d="M2558.0 1399.1 L2563.2 1404.3 L2568.4 1399.1" fill="none" stroke="#7a7a7a" stroke-width="1.6"/></svg>
<span class="t" style="left:1805.03px;top:1000px;font-size:27.00px;line-height:27.00px;color:#1b1f63;transform:scaleX(1.1315);transform-origin:0 0;">Zdobądź</span>
<svg class="a" style="left:1928.00px;top:1002.00px;" width="28.00" height="22.00" viewBox="1928.00 1002.00 28.00 22.00"><path d="M1932.4 1009.2 H1946.2 V1005.9 L1952.8 1012.6 L1946.2 1019.3 V1016.2 H1932.4 Z" fill="#1b1f63"/></svg>
<span class="t" style="left:1960.71px;top:1000px;font-size:27.00px;line-height:27.00px;color:#1b1f63;transform:scaleX(0.9977);transform-origin:0 0;">zestaw DIY …</span>
<div class="a" style="left:725.20px;top:1499.00px;width:77.80px;height:49.00px;background:#e3e3e3;border-radius:8px;"></div>
<div class="a" style="left:995.10px;top:1499.00px;width:82.90px;height:49.00px;background:#e3e3e3;border-radius:8px;"></div>
<div class="a" style="left:2345.00px;top:1499.00px;width:237.00px;height:49.00px;background:#e3e3e3;border-radius:8px;"></div>
<span class="t" style="left:1445.07px;top:1510px;font-size:27.00px;line-height:27.00px;color:#1b1f63;transform:scaleX(1.0908);transform-origin:0 0;">Zestawy do robienia ś…</span>
<span class="t" style="left:1805.07px;top:1510px;font-size:27.00px;line-height:27.00px;color:#1b1f63;transform:scaleX(1.0908);transform-origin:0 0;">Zestawy do robienia ś…</span>
<div class="a" style="left:2740.00px;top:1406.00px;width:86.00px;height:86.00px;background:#5a4ee0;border-radius:50%;box-shadow:0 4px 28px rgba(0,0,0,0.16);"></div>
<svg class="a" style="left:2755.00px;top:1425.00px;" width="55.00" height="45.00" viewBox="2755.00 1425.00 55.00 45.00"><circle cx="2791.3" cy="1452" r="10.2" fill="#fff"/><path d="M2796.5 1458 L2802.3 1461 L2800.6 1454.5 Z" fill="#fff"/><circle cx="2778.7" cy="1446.5" r="15.4" fill="#5a4ee0"/><circle cx="2778.7" cy="1446.5" r="13.5" fill="#fff"/><path d="M2767 1450.5 L2765.2 1459.3 L2772.5 1457.6 Z" fill="#fff"/><path d="M2772 1452.4 L2774.2 1443.2 Q2775 1440.6 2777 1442.6 L2780.5 1450.6 Q2782.3 1452.6 2783.1 1450 L2784.6 1440.4" fill="none" stroke="#5a4ee0" stroke-width="1.8" stroke-linejoin="round"/></svg>
</body></html>
